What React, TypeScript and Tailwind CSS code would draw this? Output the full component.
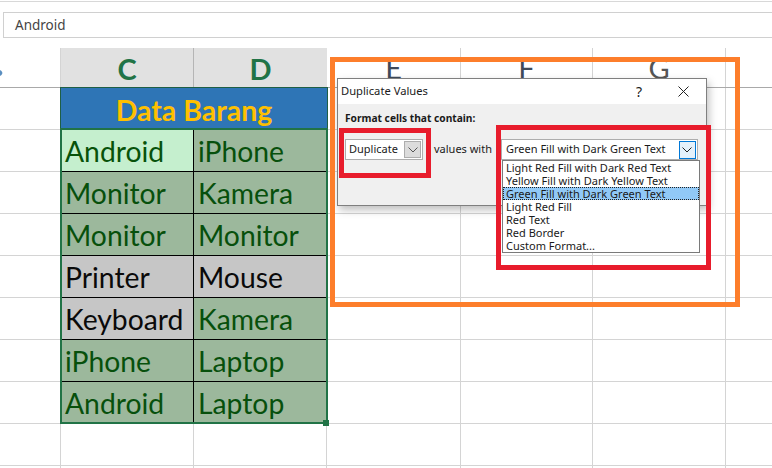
const cal = "font-['Lato','Carlito',sans-serif]";

const rows: { c: string; d: string; cs: string; ds: string }[] = [
  { c: "Android", d: "iPhone", cs: "l", ds: "g" },
  { c: "Monitor", d: "Kamera", cs: "g", ds: "g" },
  { c: "Monitor", d: "Monitor", cs: "g", ds: "g" },
  { c: "Printer", d: "Mouse", cs: "n", ds: "n" },
  { c: "Keyboard", d: "Kamera", cs: "n", ds: "g" },
  { c: "iPhone", d: "Laptop", cs: "g", ds: "g" },
  { c: "Android", d: "Laptop", cs: "g", ds: "g" },
];

function DataCell({ text, kind, right, last }: { text: string; kind: string; right?: boolean; last?: boolean }) {
  const bg =
    kind === "l"
      ? "bg-[#c5efce] text-[#07520a]"
      : kind === "g"
        ? "bg-[#9cb89c] text-[#07500c]"
        : "bg-[#c6c6c6] text-[#0a0a0a]";
  return (
    <div
      className={`${bg} ${right ? "pl-[4px]" : "border-r border-black pl-[3px]"} ${last ? "h-[40px]" : "h-[42px] border-b border-black"} text-[28.3px] leading-[43px] whitespace-nowrap overflow-hidden ${cal}`}
    >
      {text}
    </div>
  );
}

function GridRow() {
  return (
    <div className="h-[42px] border-b border-[#d4d4d4] flex">
      <div className="w-[61px] border-r border-[#d4d4d4]" />
      <div className="w-[133px] border-r border-[#d4d4d4]" />
      <div className="w-[133px] border-r border-[#d4d4d4]" />
      <div className="w-[134px] border-r border-[#d4d4d4]" />
      <div className="w-[132px] border-r border-[#d4d4d4]" />
      <div className="w-[133px] border-r border-[#d4d4d4]" />
    </div>
  );
}

function Chevron({ color = "#555" }: { color?: string }) {
  return (
    <svg width="10" height="6" viewBox="0 0 10 6" fill="none">
      <path d="M0.5 0.5 L5 5 L9.5 0.5" stroke={color} strokeWidth="1" />
    </svg>
  );
}

const options = [
  "Light Red Fill with Dark Red Text",
  "Yellow Fill with Dark Yellow Text",
  "Green Fill with Dark Green Text",
  "Light Red Fill",
  "Red Text",
  "Red Border",
  "Custom Format...",
];

export default function App() {
  return (
    <div className="relative w-[772px] h-[468px] overflow-hidden bg-white font-['Noto_Sans',sans-serif]">
      {/* formula bar */}
      <div className="h-[48px] pt-[1px]">
        <div className="h-[1px] bg-[#d8d8d8]" />
        <div className="ml-[3px] mt-[10px] h-[26px] border border-r-0 border-[#d0d0d0] pl-[11px] text-[13.5px] leading-[24px] text-[#444]">
          Android
        </div>
      </div>

      {/* column header */}
      <div className="h-[40px] flex border-b border-[#a9a9a9]">
        <div className="w-[60px] pt-[22px]">
          <svg width="3" height="6" viewBox="0 0 3 6">
            <path d="M0 0 L1.5 1 L2.5 3 L1.5 5 L0 6 Z" fill="#5b8fc0" />
          </svg>
        </div>
        <div className={`w-[134px] bg-[#e1e1e1] border-r border-[#b5b5b5] border-l border-l-[#d4d4d4] text-center text-[29px] leading-[41px] font-bold text-[#217346] ${cal}`}>C</div>
        <div className={`w-[133px] bg-[#e1e1e1] text-center text-[29px] leading-[41px] font-bold text-[#217346] ${cal}`}>D</div>
        <div className={`w-[134px] border-r border-[#d4d4d4] text-center text-[29px] leading-[39px] text-[#3f4a5a] ${cal}`}>E</div>
        <div className={`w-[132px] border-r border-[#d4d4d4] text-center text-[29px] leading-[39px] text-[#3f4a5a] ${cal}`}>F</div>
        <div className={`w-[133px] border-r border-[#d4d4d4] text-center text-[29px] leading-[39px] text-[#555] ${cal}`}>G</div>
      </div>

      {/* sheet body */}
      <div className="relative">
        {Array.from({ length: 10 }).map((_, i) => (
          <GridRow key={i} />
        ))}

        {/* data table overlays the grid cells */}
        <div className="absolute left-[60px] top-[-1px] w-[268px]">
          <div className={`h-[41px] bg-[#2e75b6] border-x border-t border-[#1f5f45] text-center text-[28.5px] leading-[44px] font-bold text-[#ffc000] ${cal}`}>
            Data Barang
          </div>
          <div className="border-2 border-[#217346]">
            <div className="grid grid-cols-[132px_1fr]">
              {rows.map((r, i) => (
                <div key={i} className="contents">
                  <DataCell text={r.c} kind={r.cs} last={i === rows.length - 1} />
                  <DataCell text={r.d} kind={r.ds} right last={i === rows.length - 1} />
                </div>
              ))}
            </div>
          </div>
          <div className="absolute right-[-1px] bottom-[-2px] w-[6px] h-[6px] bg-[#217346]" />
        </div>
      </div>

      {/* dialog */}
      <div className="absolute left-[337px] top-[78px] w-[370px] h-[128px] bg-[#f0f0f0] border border-[#7f7f7f] shadow-[2px_4px_8px_rgba(0,0,0,0.25)] text-[#1a1a1a]">
        <div className="h-[25px] bg-white flex items-center pl-[3px] text-[11.2px]">
          <span className="flex-1">Duplicate Values</span>
          <span className="mr-[36px] text-[14px]">?</span>
          <svg className="mr-[17px]" width="11" height="11" viewBox="0 0 11 11" fill="none">
            <path d="M0.5 0.5 L10.5 10.5 M10.5 0.5 L0.5 10.5" stroke="#222" strokeWidth="1" />
          </svg>
        </div>
        <div className="pl-[7px] pt-[7px] text-[10.2px] leading-[15px] font-bold">Format cells that contain:</div>
        <div className="flex items-center mt-[13px] pl-[7px] text-[11px]">
          <div className="w-[78px] h-[21px] bg-white border border-[#adadad] flex items-center pl-[2px] pr-[1px]">
            <span className="flex-1 pl-[1px]">Duplicate</span>
            <span className="w-[17px] h-[17px] bg-[#dcdcdc] border border-[#adadad] flex items-center justify-center">
              <Chevron />
            </span>
          </div>
          <span className="ml-[11px]">values with</span>
          <div className="ml-[9px] w-[197px] h-[21px] bg-white border border-[#adadad] flex items-center pl-[4px] pr-[1px]">
            <span className="flex-1">Green Fill with Dark Green Text</span>
            <span className="w-[17px] h-[18px] bg-[#e5f1fb] border border-[#0078d7] flex items-center justify-center">
              <Chevron color="#222" />
            </span>
          </div>
        </div>
      </div>

      {/* open list */}
      <div className="absolute left-[502px] top-[160px] w-[198px] h-[93px] bg-white border border-[#7a7a7a] text-[11px] leading-[13px] text-[#1a1a1a]">
        {options.map((o, i) => (
          <div
            key={o}
            className={`h-[13px] pl-[3px] whitespace-nowrap ${i === 2 ? "bg-[#91c9f7] outline-1 outline-dotted outline-offset-[-1px] outline-[#222]" : ""}`}
          >
            {o}
          </div>
        ))}
      </div>

      {/* annotations */}
      <div className="absolute left-[330px] top-[57px] w-[410px] h-[250px] border-[5px] border-[#fd7e2b]" />
      <div className="absolute left-[339px] top-[128px] w-[92px] h-[50px] border-[5px] border-[#e81c2c]" />
      <div className="absolute left-[496px] top-[125px] w-[215px] h-[145px] border-[5px] border-[#e81c2c]" />
    </div>
  );
}
